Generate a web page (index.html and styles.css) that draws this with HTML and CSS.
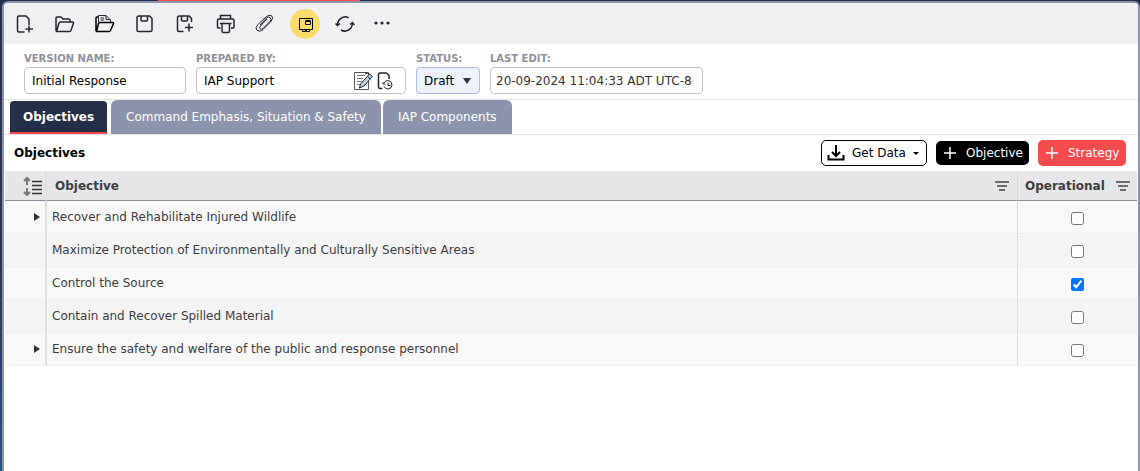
FILE: index.html
```
<!DOCTYPE html>
<html lang="en">
<head>
    <meta charset="UTF-8">
    <meta name="viewport" content="width=device-width, initial-scale=1.0">
    <title>Objectives</title>
    <link rel="stylesheet" href="styles.css">
</head>
<body>
    <div class="top-accent"></div>
    <main class="panel">
        <div class="toolbar">
            <button class="tool" aria-label="New">
                <svg width="20" height="20" viewBox="0 0 20 20"><path d="M9.500 18H4Q2.500 18 2.500 16.500V3.500Q2.500 2 4 2H11L14 5V11M10.500 15H18M14 11.500V18.500"/></svg>
            </button>
            <button class="tool" aria-label="Open">
                <svg width="20" height="20" viewBox="0 0 20 20"><path d="M1 17V4Q1 3 2 3H6L8 5H14Q15 5 15 6V8M1.500 17.500L4 9Q4.500 8 5.500 8H17.500Q18.700 8 18.500 9L16 16.500Q15.500 17.500 14.500 17.500Z"/></svg>
            </button>
            <button class="tool" aria-label="Open template">
                <svg width="20" height="20" viewBox="0 0 20 20"><path class="heavy" d="M1 17V4Q1 3 2 3H3.500M1.500 17.500L3.500 9.500Q4 8.500 5 8.500H17.500Q18.700 8.500 18.500 9.500L15.500 16.500Q15 17.500 14 17.500Z"/><path class="fine" d="M3.500 8V1.500H11L15.500 6V8M11 1.500V5.500H15M5.500 4H9M5.500 6H9"/></svg>
            </button>
            <button class="tool" aria-label="Save">
                <svg width="20" height="20" viewBox="0 0 20 20"><path d="M4 2H14.500L17 4.500V16Q17 17.500 15.500 17.500H3.500Q2 17.500 2 16V4Q2 2 4 2ZM6 2V6Q6 7 7 7H11.500Q12.500 7 12.500 6V2"/></svg>
            </button>
            <button class="tool" aria-label="Save as">
                <svg width="20" height="20" viewBox="0 0 20 20"><path d="M8.500 17.500H4Q2.500 17.500 2.500 16V4Q2.500 2 4.500 2H14L16.500 4.500V8M6.500 2V6Q6.500 7 7.500 7H11.500Q12.500 7 12.500 6V2M10 13.500H18M14 9.500V17.500"/></svg>
            </button>
            <button class="tool" aria-label="Print">
                <svg width="20" height="20" viewBox="0 0 20 20"><path d="M5.500 5V1.500H15.500V5M5.500 14H3Q2.500 14 2.500 13V6.500Q2.500 5 4 5H17.500Q19 5 19 6.500V13Q19 14 18.500 14H16M7 9.500H14.500V17Q14.500 18.500 13 18.500H8.500Q7 18.500 7 17ZM5 9.500H16.500"/></svg>
            </button>
            <button class="tool" aria-label="Attach">
                <svg width="20" height="20" viewBox="0 0 20 20"><path class="clip" d="M5 11L11.500 4Q13.500 2 15.300 3.700Q16.800 5.300 15 7.300L8 14.500Q6.500 16 5.200 14.800Q4 13.500 5.500 12L12 5M5 8.500L3 10.500Q-.5 14 2 16.300Q4.800 18.500 8 15.500L16 7.500Q19 4 16.700 1.800Q14 .2 11 3L5 8.500"/></svg>
            </button>
            <button class="tool active" aria-label="Display">
                <svg width="20" height="20" viewBox="0 0 20 20"><path class="display" d="M4.500 4.500H17.500V15.500H4.500ZM10.500 7.500H15.500V10.500H10.500ZM10.500 6.500H15.500M7.500 15.500V17.500H10.500V15.500M11.500 15.500V17.500H14.500V15.500"/></svg>
            </button>
            <button class="tool" aria-label="Refresh">
                <svg width="20" height="20" viewBox="0 0 20 20"><path d="M2.500 11Q2.800 4.500 9 3Q11.500 2.500 13.500 3.800M.5 9.500L2.500 11.500L5 9.500M17.500 9Q17.200 15.500 11 17Q8.500 17.500 6 16M15 10.500L17.500 8.500L19.500 11"/></svg>
            </button>
            <button class="tool more" aria-label="More">
                <svg width="20" height="20" viewBox="0 0 20 20"><g class="solid"><circle cx="4" cy="9" r="1.600"/><circle cx="10" cy="9" r="1.600"/><circle cx="16" cy="9" r="1.600"/></g></svg>
            </button>
        </div>

        <form class="details">
            <div class="field">
                <label for="version">VERSION NAME:</label>
                <input type="text" id="version" class="version" value="Initial Response">
            </div>
            <div class="field">
                <label for="prepared">PREPARED BY:</label>
                <div class="input-group">
                    <input type="text" id="prepared" value="IAP Support">
                    <button type="button" class="icon-button" aria-label="Sign">
                        <svg width="20" height="20" viewBox="0 0 20 20"><path class="page" d="M1.500 1.500H15.500V18.500H1.500Z"/><path class="lines" d="M4 4.500H12M4 7.500H10M4 10.500H9M4 13.500H7"/><path class="pen" d="M7.500 13L16.500 3L19.500 5.500L11 15L6.500 17Z"/><path class="fine" d="M12 3Q15 1 16.500 3M14.500 5.500L17.500 8"/></svg>
                    </button>
                    <button type="button" class="icon-button" aria-label="History">
                        <svg width="20" height="20" viewBox="0 0 20 20"><path d="M6.500 17.500H4Q2.500 17.500 2.500 16V3.500Q2.500 2 4 2H10.500L13 4.500V8"/><path class="fine" d="M8 12Q9 9.500 12 9.500Q16 10 16 14Q15.500 18 12 18Q9 18 8 15.500M7 11V13H9.500M12 11.500V14.500H14.500"/></svg>
                    </button>
                </div>
            </div>
            <div class="field">
                <label for="status">STATUS:</label>
                <div class="select-wrap">
                    <select id="status">
                        <option>Draft</option>
                        <option>Final</option>
                    </select>
                </div>
            </div>
            <div class="field">
                <label for="last-edit">LAST EDIT:</label>
                <input type="text" id="last-edit" class="last-edit" value="20-09-2024 11:04:33 ADT UTC-8" readonly>
            </div>
        </form>

        <nav class="tabs">
            <a href="#objectives" class="tab selected">Objectives</a>
            <a href="#command" class="tab">Command Emphasis, Situation &amp; Safety</a>
            <a href="#components" class="tab">IAP Components</a>
        </nav>

        <div class="section-bar">
            <h1>Objectives</h1>
            <button class="action get-data">
                <svg width="18" height="18" viewBox="0 0 18 18"><path d="M9 1V11M5 8L9 12L13 8M1.500 11V15.500H16.500V11"/></svg>
                Get Data
                <span class="caret"></span>
            </button>
            <button class="action objective">
                <svg width="12" height="12" viewBox="0 0 12 12"><path d="M0 6H12M6 0V12"/></svg>
                Objective
            </button>
            <button class="action strategy">
                <svg width="12" height="12" viewBox="0 0 12 12"><path d="M0 6H12M6 0V12"/></svg>
                Strategy
            </button>
        </div>

        <table class="grid">
            <thead>
                <tr>
                    <th class="toggle-col">
                        <svg width="20" height="20" viewBox="0 0 20 20"><path class="arrows" d="M4 9V2M1 5L4 2L7 5M4 12V19M1 16L4 19L7 16"/><path class="bars" d="M9 5.500H19M9 9.500H19M9 13.500H19M9 17.500H19"/></svg>
                    </th>
                    <th>
                        <div class="head-cell">Objective
                            <svg width="14" height="10" viewBox="0 0 14 10"><path d="M0 1H14M2 5H12M4 9H10"/></svg>
                        </div>
                    </th>
                    <th class="operational-col">
                        <div class="head-cell">Operational
                            <svg width="14" height="10" viewBox="0 0 14 10"><path d="M0 1H14M2 5H12M4 9H10"/></svg>
                        </div>
                    </th>
                </tr>
            </thead>
            <tbody>
                <tr>
                    <td class="toggle-col"><button class="expand" aria-label="Expand"></button></td>
                    <td><label for="op1">Recover and Rehabilitate Injured Wildlife</label></td>
                    <td class="operational-col"><input type="checkbox" id="op1"></td>
                </tr>
                <tr>
                    <td class="toggle-col"></td>
                    <td><label for="op2">Maximize Protection of Environmentally and Culturally Sensitive Areas</label></td>
                    <td class="operational-col"><input type="checkbox" id="op2"></td>
                </tr>
                <tr>
                    <td class="toggle-col"></td>
                    <td><label for="op3">Control the Source</label></td>
                    <td class="operational-col"><input type="checkbox" id="op3" checked></td>
                </tr>
                <tr>
                    <td class="toggle-col"></td>
                    <td><label for="op4">Contain and Recover Spilled Material</label></td>
                    <td class="operational-col"><input type="checkbox" id="op4"></td>
                </tr>
                <tr>
                    <td class="toggle-col"><button class="expand" aria-label="Expand"></button></td>
                    <td><label for="op5">Ensure the safety and welfare of the public and response personnel</label></td>
                    <td class="operational-col"><input type="checkbox" id="op5"></td>
                </tr>
            </tbody>
        </table>
    </main>
</body>
</html>
```
FILE: styles.css
```
* {
    box-sizing: border-box;
}
body {
    margin: 0;
    min-height: 100vh;
    display: flex;
    flex-direction: column;
    padding-left: 2px;
    background: linear-gradient(#252f4a, #2d3558 60%, #24557f);
    font-family: "DejaVu Sans", Verdana, sans-serif;
    font-size: 12px;
    line-height: 16px;
    color: #3d3d3f;
}
button, input, select {
    font-family: inherit;
    font-size: inherit;
    color: inherit;
}
button {
    border: none;
    cursor: pointer;
}
svg {
    display: block;
    flex: none;
    fill: none;
    stroke: #23262f;
    stroke-width: 1.5px;
}
.top-accent {
    width: 202px;
    height: 1px;
    margin-left: 156px;
    background: #f34b4e;
}
.panel {
    flex: 1;
    background: #fff;
    border: 2px solid #8c94ad;
    border-bottom: none;
    border-radius: 6px 6px 0 0;
    overflow: hidden;
}

/* toolbar */
.toolbar {
    display: flex;
    align-items: center;
    gap: 10px;
    padding: 6px 6px 5px;
    background: #f0f0f2;
}
.tool {
    display: flex;
    align-items: center;
    justify-content: center;
    width: 30px;
    height: 30px;
    padding: 0;
    border-radius: 50%;
    background: none;
}
.tool.active {
    background: #fbdb6c;
}
.tool.more {
    width: 24px;
}
.heavy {
    stroke: #000;
}
.fine, .clip {
    stroke-width: 1px;
}
.display {
    stroke: #000;
    stroke-width: 1px;
}
.solid {
    fill: #23262f;
    stroke: none;
}

/* version details */
.details {
    display: flex;
    gap: 10px;
    padding: 7px 20px 5px;
    border-bottom: 1px solid #e4e4e6;
}
.field label {
    display: block;
    font-size: 10px;
    font-weight: bold;
    color: #909198;
}
.field input, .select-wrap, .input-group {
    height: 27px;
    border: 1px solid #c2c2c4;
    border-radius: 4px;
    background: #fff;
}
.field input {
    padding: 0 7px;
    color: #000;
    display: block;
}
.version {
    width: 162px;
}
.field .last-edit {
    width: 213px;
    padding: 0 5px;
    color: #333;
}
.input-group {
    display: flex;
    align-items: center;
    gap: 3px;
    width: 210px;
    padding-right: 9px;
}
.input-group input {
    flex: 1;
    min-width: 0;
    height: 20px;
    border: none;
}
.icon-button {
    padding: 0;
    background: none;
}
.page {
    fill: #fff;
    stroke: #555;
    stroke-width: 1px;
}
.lines {
    stroke: #777;
    stroke-width: 1px;
}
.pen {
    fill: #b8d2ea;
    stroke-width: 1px;
}
.select-wrap {
    display: flex;
    align-items: center;
    width: 64px;
    padding-right: 8px;
    border-color: #a9bdd8;
    background: #edf2fa;
}
.select-wrap::after {
    content: "";
    border: 4px solid transparent;
    border-top: 6px solid #333;
    border-bottom: none;
}
.select-wrap select {
    flex: 1;
    min-width: 0;
    padding: 0 0 0 7px;
    border: none;
    background: none;
    appearance: none;
    color: #000;
}

/* tabs */
.tabs {
    display: flex;
    align-items: flex-end;
    gap: 2px;
    padding: 0 6px;
    border-bottom: 1px solid #e4e4e6;
}
.tab {
    padding: 9px 15px;
    border-radius: 6px 6px 0 0;
    background: #8c94ad;
    color: #fff;
    text-decoration: none;
}
.tab.selected {
    margin-right: 2px;
    padding: 8px 13px 7px;
    border-bottom: 2px solid #f8474a;
    border-radius: 4px 4px 0 0;
    background: #252f4a;
    font-weight: bold;
}

/* section heading and actions */
.section-bar {
    display: flex;
    align-items: center;
    gap: 9px;
    padding: 5px 12px 5px 10px;
}
h1 {
    flex: 1;
    margin: 0;
    font-size: 12px;
    color: #000;
}
.action {
    display: flex;
    align-items: center;
    height: 26px;
    border-radius: 5px;
    color: #fff;
}
.action svg {
    stroke: #fff;
}
.get-data {
    gap: 7px;
    width: 106px;
    padding: 0 5px;
    border: 1px solid #000;
    background: #fff;
    color: #000;
}
.get-data svg {
    stroke: #000;
    stroke-width: 2px;
}
.caret {
    border: 3px solid transparent;
    border-top-color: #000;
    border-bottom: none;
}
.objective, .strategy {
    gap: 10px;
    padding: 0 8px;
}
.objective {
    width: 93px;
    height: 24px;
    background: #000;
}
.strategy {
    width: 88px;
    background: #f34b4e;
}

/* objectives table */
.grid {
    width: 100%;
    padding: 0 1px;
    border-collapse: separate;
    border-spacing: 0;
    table-layout: fixed;
}
th {
    height: 30px;
    padding: 0 8px;
    border-bottom: 1px solid #918e9c;
    background: #e7e7ea;
    text-align: left;
}
td {
    height: 33px;
    padding: 0 5px;
    border-bottom: 1px solid #ececee;
    background: #f8f8f8;
}
tr:nth-child(even) td {
    background: #f4f4f4;
}
.toggle-col {
    width: 42px;
    padding: 0 0 0 18px;
    border-right: 2px solid #dfdfe2;
}
td.toggle-col {
    padding-left: 29px;
}
.operational-col {
    width: 120px;
    padding: 0 7px;
    border-left: 1px solid #dadadc;
}
td.operational-col {
    text-align: center;
}
.head-cell {
    display: flex;
    align-items: center;
    justify-content: space-between;
}
.head-cell svg {
    stroke: #444;
}
.arrows {
    stroke: #777;
    stroke-width: 2px;
}
.bars {
    stroke: #333;
}
.expand {
    display: block;
    width: 0;
    height: 0;
    padding: 0;
    border: 4px solid transparent;
    border-left: 6px solid #333;
    border-right: none;
    background: none;
}
input[type="checkbox"] {
    display: block;
    width: 13px;
    height: 13px;
    margin: 3px auto 0;
    accent-color: #0075ff;
}
```
